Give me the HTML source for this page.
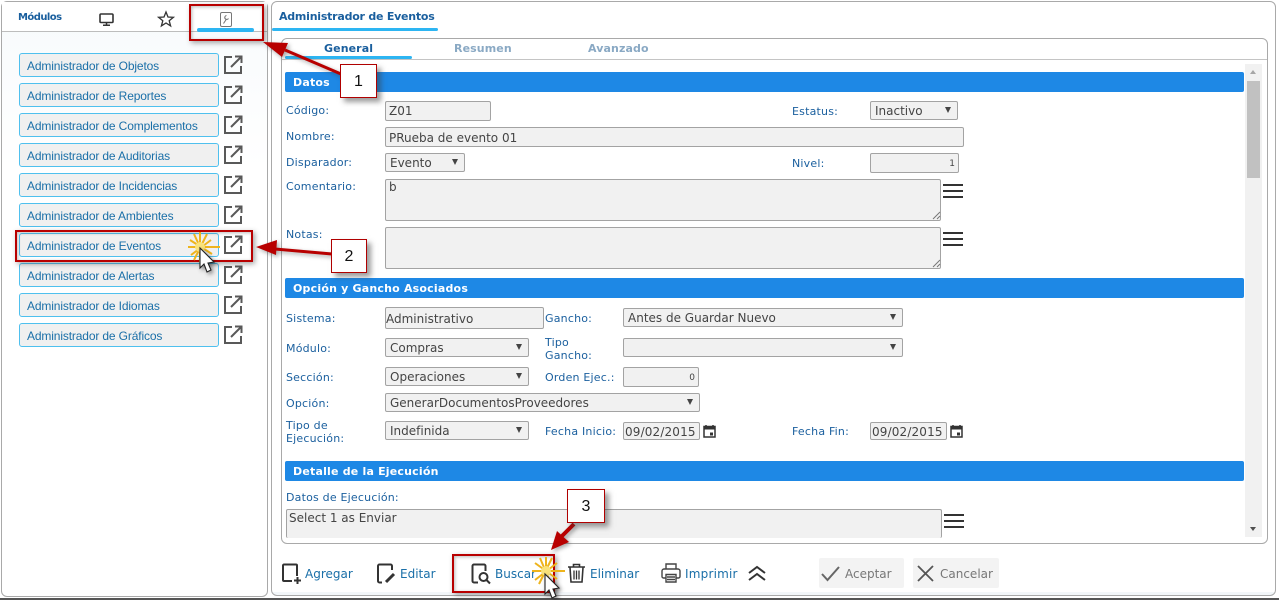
<!DOCTYPE html>
<html lang="es"><head><meta charset="utf-8"><title>Administrador de Eventos</title>
<style>
html,body{margin:0;padding:0}
body{width:1279px;height:600px;overflow:hidden;background:#fff;position:relative;font-family:"DejaVu Sans","Liberation Sans",sans-serif;font-size:11px;color:#1a5f9e}
div,span{position:absolute;box-sizing:border-box;white-space:nowrap}
svg{position:absolute;overflow:visible}
.panel{border:1px solid #a9a9a9;border-radius:6px;background:#fff}
.m{left:19px;width:200px;height:24px;background:#f0f0f0;border:1px solid #4fc0ee;border-radius:3px;font:12px/24px "Liberation Sans",sans-serif;letter-spacing:-.14px;color:#1a6fa8;padding-left:7px}
.l{line-height:16px;color:#1a5f9e;font-size:11px;letter-spacing:.2px}
.bar{left:285px;width:959px;height:20px;background:#1e88e5;border-radius:2px;color:#fff;font-weight:bold;font-size:11px;line-height:21px;padding-left:8px;letter-spacing:.2px}
.i{background:#f1f1f1;border:1px solid #a3a3a3;border-radius:2px;color:#444;font-size:12px;line-height:20px;padding-left:3px}
.s{background:#f1f1f1;border:1px solid #a3a3a3;border-radius:2px;color:#444;font-size:12px;line-height:19px;padding-left:4px}
.s::after{content:"";position:absolute;right:6px;top:5px;border-left:3.5px solid transparent;border-right:3.5px solid transparent;border-top:6px solid #444}
.hb{width:20px;height:14px;border-top:2px solid #333;border-bottom:2px solid #333}
.hb::after{content:"";position:absolute;left:0;right:0;top:4px;height:2px;background:#333}
.t{font-size:12px;color:#1a6fa8;line-height:16px;top:566px}
.tab{font-weight:bold;font-size:11px;line-height:16px;top:41px;letter-spacing:.1px}
.call{background:#fff;border:1px solid #b00000;box-shadow:4px 4px 5px rgba(60,60,60,.5);font:16px/34px "Liberation Sans",sans-serif;color:#111;text-align:center}
.red{border:2px solid #b80000;box-shadow:2px 2px 5px rgba(60,60,60,.45),inset 1px 1px 3px rgba(60,60,60,.35)}
.dis{background:#f3f3f3;border-radius:2px;top:558px;height:30px;color:#777;font-size:12px;line-height:32px}
</style></head><body>

<div class="panel" style="left:1px;top:1px;width:267px;height:596px;background:linear-gradient(#f7fafc,#fff 28%)"></div>
<div style="left:2px;top:2px;width:265px;height:30px;background:#fff;border-bottom:1px solid #bdbdbd"></div>
<div style="left:18px;top:10px;font-weight:bold;font-size:10px;line-height:16px;letter-spacing:-.55px;color:#1a5f9e">Módulos</div>
<svg style="left:99px;top:13px" width="16" height="13" viewBox="0 0 16 13" fill="none" stroke="#333"><rect x="1" y="1" width="13" height="8.5" rx="1" stroke-width="1.6"/><path d="M7.500 10v2M4 12.300h7" stroke-width="1.500"/></svg>
<svg style="left:158px;top:11px" width="16" height="16" viewBox="0 0 16 16"><path d="M8 1l2 5 5.400.3-4.200 3.400 1.400 5.200L8 12l-4.600 2.900 1.400-5.200L.6 6.300 6 6z" fill="none" stroke="#333" stroke-width="1.300"/></svg>
<svg style="left:220px;top:12px" width="12" height="15" viewBox="0 0 12 15" fill="none" stroke="#777"><rect x=".5" y=".5" width="11" height="14" rx="1.500"/><path d="M3.500 11.500l3-4.500M6.500 3.500a2 2 0 1 0 2 3" stroke-width="1.100"/></svg>
<div style="left:197px;top:28px;width:57px;height:4px;background:#2db5f2;border-radius:2px"></div>

<div class="m" style="top:53px">Administrador de Objetos</div>
<div class="m" style="top:83px">Administrador de Reportes</div>
<div class="m" style="top:113px">Administrador de Complementos</div>
<div class="m" style="top:143px">Administrador de Auditorias</div>
<div class="m" style="top:173px">Administrador de Incidencias</div>
<div class="m" style="top:203px">Administrador de Ambientes</div>
<div class="m" style="top:233px">Administrador de Eventos</div>
<div class="m" style="top:263px">Administrador de Alertas</div>
<div class="m" style="top:293px">Administrador de Idiomas</div>
<div class="m" style="top:323px">Administrador de Gráficos</div>

<svg width="0" height="0"><defs><g id="ext" fill="none" stroke="#595959" stroke-width="2"><path d="M8 2H1v16h16v-7"/><path d="M7 12L17 2M11 1.500h6.500V8"/></g></defs></svg>
<svg style="left:224px;top:55px" width="19" height="19"><use href="#ext"/></svg>
<svg style="left:224px;top:85px" width="19" height="19"><use href="#ext"/></svg>
<svg style="left:224px;top:115px" width="19" height="19"><use href="#ext"/></svg>
<svg style="left:224px;top:145px" width="19" height="19"><use href="#ext"/></svg>
<svg style="left:224px;top:175px" width="19" height="19"><use href="#ext"/></svg>
<svg style="left:224px;top:205px" width="19" height="19"><use href="#ext"/></svg>
<svg style="left:224px;top:235px" width="19" height="19"><use href="#ext"/></svg>
<svg style="left:224px;top:265px" width="19" height="19"><use href="#ext"/></svg>
<svg style="left:224px;top:295px" width="19" height="19"><use href="#ext"/></svg>
<svg style="left:224px;top:325px" width="19" height="19"><use href="#ext"/></svg>

<div class="panel" style="left:271px;top:1px;width:1005px;height:595px;background:linear-gradient(#fff 590px,#f2f6f9 590px)"></div>
<div style="left:279px;top:9px;font-weight:bold;font-size:11px;line-height:16px;color:#1a5f9e;letter-spacing:-.23px">Administrador de Eventos</div>
<div style="left:272px;top:28px;width:166px;height:3px;background:#2db5f2;border-radius:2px"></div>

<div class="panel" style="left:281px;top:38px;width:987px;height:506px"></div>
<div style="left:282px;top:59px;width:985px;height:1px;background:#c4c4c4"></div>
<div class="tab" style="left:324px;color:#1a5f9e">General</div>
<div class="tab" style="left:454px;color:#8aa9c4">Resumen</div>
<div class="tab" style="left:588px;color:#8aa9c4">Avanzado</div>
<div style="left:285px;top:56px;width:127px;height:3px;background:#2db5f2;border-radius:2px"></div>

<div style="left:1245px;top:64px;width:17px;height:473px;background:#f1f1f1"></div>
<div style="left:1247px;top:81px;width:13px;height:97px;background:#c1c1c1"></div>
<div style="left:1250px;top:70px;border-left:3.500px solid transparent;border-right:3.500px solid transparent;border-bottom:4px solid #a6a6a6"></div>
<div style="left:1250px;top:527px;border-left:3.500px solid transparent;border-right:3.500px solid transparent;border-top:4px solid #505050"></div>

<div class="bar" style="top:72px">Datos</div>
<div class="l" style="left:286px;top:103px">Código:</div>
<div class="i" style="left:385px;top:101px;width:106px;height:20px;line-height:18px">Z01</div>
<div class="l" style="left:792px;top:104px">Estatus:</div>
<div class="s" style="left:870px;top:101px;width:88px;height:19px">Inactivo</div>
<div class="l" style="left:286px;top:129px">Nombre:</div>
<div class="i" style="left:385px;top:127px;width:579px;height:20px">PRueba de evento 01</div>
<div class="l" style="left:286px;top:155px">Disparador:</div>
<div class="s" style="left:385px;top:153px;width:80px;height:19px">Evento</div>
<div class="l" style="left:792px;top:156px">Nivel:</div>
<div class="i" style="left:870px;top:153px;width:89px;height:20px;text-align:right;padding-right:3px;font-size:9px;line-height:21px">1</div>
<div class="l" style="left:286px;top:179px">Comentario:</div>
<div class="i" style="left:385px;top:179px;width:556px;height:42px;line-height:15px">b</div>
<svg style="left:932px;top:210px" width="9" height="10" stroke="#777" fill="none"><path d="M1 9l7-7M5 9l3-3"/></svg>
<div class="hb" style="left:943px;top:184px"></div>
<div class="l" style="left:286px;top:227px">Notas:</div>
<div class="i" style="left:385px;top:227px;width:556px;height:42px"></div>
<svg style="left:932px;top:258px" width="9" height="10" stroke="#777" fill="none"><path d="M1 9l7-7M5 9l3-3"/></svg>
<div class="hb" style="left:943px;top:232px"></div>

<div class="bar" style="top:278px">Opción y Gancho Asociados</div>
<div class="l" style="left:286px;top:311px">Sistema:</div>
<div class="i" style="left:385px;top:307px;width:159px;height:22px;line-height:22px;padding-left:0">Administrativo</div>
<div class="l" style="left:545px;top:311px">Gancho:</div>
<div class="s" style="left:623px;top:308px;width:280px;height:19px">Antes de Guardar Nuevo</div>
<div class="l" style="left:286px;top:341px">Módulo:</div>
<div class="s" style="left:385px;top:338px;width:144px;height:19px">Compras</div>
<div class="l" style="left:545px;top:335px">Tipo</div>
<div class="l" style="left:545px;top:348px">Gancho:</div>
<div class="s" style="left:623px;top:338px;width:280px;height:19px"></div>
<div class="l" style="left:286px;top:370px">Sección:</div>
<div class="s" style="left:385px;top:367px;width:144px;height:19px">Operaciones</div>
<div class="l" style="left:545px;top:370px">Orden Ejec.:</div>
<div class="i" style="left:623px;top:367px;width:76px;height:20px;text-align:right;padding-right:3px;font-size:9px;line-height:21px">0</div>
<div class="l" style="left:286px;top:396px">Opción:</div>
<div class="s" style="left:385px;top:393px;width:315px;height:19px">GenerarDocumentosProveedores</div>
<div class="l" style="left:286px;top:418px">Tipo de</div>
<div class="l" style="left:286px;top:431px">Ejecución:</div>
<div class="s" style="left:385px;top:421px;width:144px;height:19px">Indefinida</div>
<div class="l" style="left:545px;top:424px">Fecha Inicio:</div>
<div class="i" style="left:623px;top:422px;width:77px;height:18px;line-height:18px;padding-left:1px;letter-spacing:.15px">09/02/2015</div>
<svg style="left:703px;top:424px" width="13" height="14" viewBox="0 0 13 14"><path d="M1 2.500h11v10.500H1zM3 1v2M10 1v2" fill="none" stroke="#333" stroke-width="1.500"/><path d="M1 3h11v2.500H1z" fill="#333"/><rect x="7" y="8.500" width="3" height="3" fill="#333"/></svg>
<div class="l" style="left:792px;top:424px">Fecha Fin:</div>
<div class="i" style="left:870px;top:422px;width:77px;height:18px;line-height:18px;padding-left:1px;letter-spacing:.15px">09/02/2015</div>
<svg style="left:950px;top:424px" width="13" height="14" viewBox="0 0 13 14"><path d="M1 2.500h11v10.500H1zM3 1v2M10 1v2" fill="none" stroke="#333" stroke-width="1.500"/><path d="M1 3h11v2.500H1z" fill="#333"/><rect x="7" y="8.500" width="3" height="3" fill="#333"/></svg>

<div class="bar" style="top:461px">Detalle de la Ejecución</div>
<div class="l" style="left:286px;top:490px">Datos de Ejecución:</div>
<div class="i" style="left:286px;top:509px;width:656px;height:29px;border-bottom:0;line-height:16px;padding-left:2px">Select 1 as Enviar</div>
<div class="hb" style="left:944px;top:514px"></div>

<svg style="left:282px;top:564px" width="20" height="20" viewBox="0 0 20 20" fill="none" stroke="#333" stroke-width="2"><path d="M10 17H2a1 1 0 0 1-1-1V1.500a1 1 0 0 1 1-1h12a1 1 0 0 1 1 1V12"/><path d="M12 16.500h7M15.500 13v7"/></svg>
<div class="t" style="left:305px">Agregar</div>
<svg style="left:377px;top:564px" width="20" height="20" viewBox="0 0 20 20" fill="none" stroke="#333" stroke-width="2"><path d="M5 18.500H2.500a1.500 1.500 0 0 1-1.500-1.500V2a1.500 1.500 0 0 1 1.500-1.500h11a1.500 1.500 0 0 1 1.500 1.500V6"/><path d="M9 18l8-8" stroke-width="3"/></svg>
<div class="t" style="left:400px">Editar</div>
<svg style="left:472px;top:564px" width="20" height="20" viewBox="0 0 20 20" fill="none" stroke="#333" stroke-width="2"><path d="M6 18.500H2a1.500 1.500 0 0 1-1.500-1.500V2A1.500 1.500 0 0 1 2 .5h10A1.500 1.500 0 0 1 13.500 2v5"/><circle cx="11.500" cy="13" r="4"/><path d="M14.500 16l3.500 3.500"/></svg>
<div class="t" style="left:495px">Buscar</div>
<svg style="left:567px;top:563px" width="19" height="20" viewBox="0 0 19 20" fill="none" stroke="#333"><path d="M1 4h17M6.500 3.500V1.500h6v2" stroke-width="1.600"/><path d="M3 4.500l1 14.500h11l1-14.500" stroke-width="1.600"/><path d="M7 7.500v9M9.500 7.500v9M12 7.500v9" stroke-width="1.300"/></svg>
<div class="t" style="left:590px">Eliminar</div>
<svg style="left:661px;top:563px" width="20" height="20" viewBox="0 0 20 20" fill="none" stroke="#444" stroke-width="1.400"><path d="M5 6V1h10v5M5 15H2.500A1.500 1.500 0 0 1 1 13.500V8a2 2 0 0 1 2-2h14a2 2 0 0 1 2 2v5.500a1.500 1.500 0 0 1-1.500 1.500H15"/><path d="M5 11.500h10V19H5z"/><path d="M6 14h8M6 16.500h8"/></svg>
<div class="t" style="left:685px;letter-spacing:.2px">Imprimir</div>
<svg style="left:747px;top:565px" width="20" height="17" viewBox="0 0 20 17" fill="none" stroke="#333" stroke-width="2"><path d="M2 8l8-6 8 6M2 15l8-6 8 6"/></svg>

<div class="dis" style="left:819px;width:85px;padding-left:26px">Aceptar</div>
<svg style="left:821px;top:565px" width="20" height="17" viewBox="0 0 20 17" fill="none" stroke="#666" stroke-width="2"><path d="M1 9l5.500 6L18 2"/></svg>
<div class="dis" style="left:913px;width:86px;padding-left:27px">Cancelar</div>
<svg style="left:917px;top:565px" width="17" height="17" viewBox="0 0 17 17" fill="none" stroke="#555" stroke-width="1.800"><path d="M1 1l15 15M16 1L1 16"/></svg>

<div style="left:0;top:598px;width:1279px;height:2px;background:#555"></div>

<!-- callouts -->
<div class="red" style="left:189px;top:4px;width:75px;height:37px"></div>
<div class="red" style="left:15px;top:230px;width:238px;height:32px"></div>
<div class="red" style="left:452px;top:554px;width:103px;height:39px"></div>

<svg style="left:0;top:0" width="1279" height="600">
<g style="filter:drop-shadow(2px 2px 2px rgba(60,60,60,.45))">
<path d="M341 74L285 50" stroke="#b80000" stroke-width="3"/><path d="M263 42l25 1-6 14z" fill="#b80000"/>
<path d="M332 254L275 249" stroke="#b80000" stroke-width="3"/><path d="M256 247l21-7-1 15z" fill="#b80000"/>
<path d="M574 524L561 537" stroke="#b80000" stroke-width="4"/><path d="M551 550l6-19 12 11z" fill="#b80000"/>
</g>
<g stroke="#eeb41c" stroke-width="2" fill="none">
<path d="M188 247H220M190 240L212 254M191 255L211 240M194 234L206 260M207 234L194 260M200 232V262"/>
<circle cx="200" cy="247" r="5" fill="#f9e27a" stroke="none"/>
</g>
<g stroke="#eeb41c" stroke-width="2" fill="none">
<path d="M532 571H565M535 563L557 579M535 580L557 563M540 558L551 584M552 558L539 584M546 557V586"/>
<circle cx="546" cy="571" r="5" fill="#f9e27a" stroke="none"/>
</g>
<g fill="#fff" stroke="#222" stroke-width="1.100" style="filter:drop-shadow(2px 2px 2px rgba(0,0,0,.45))">
<path d="M200 248v20l4-4 3 8 4-2-3-7 6-1z"/>
<path d="M545 574v20l4-4 3 8 4-2-3-7 6-1z"/>
</g>
</svg>
<div class="call" style="left:340px;top:64px;width:37px;height:34px">1</div>
<div class="call" style="left:331px;top:239px;width:36px;height:34px">2</div>
<div class="call" style="left:567px;top:489px;width:38px;height:34px">3</div>
</body></html>
